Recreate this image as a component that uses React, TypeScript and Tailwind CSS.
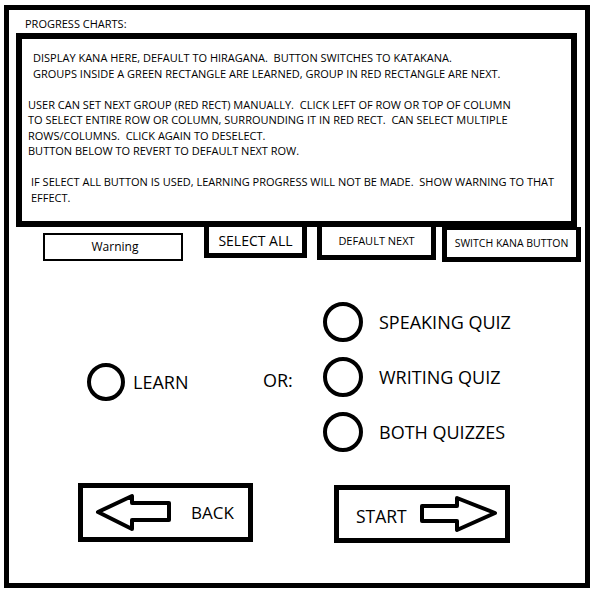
import React from "react";

const font = { fontFamily: '"Open Sans", "Liberation Sans", sans-serif' };

const Radio: React.FC<{ size?: string }> = ({ size = "w-[40px] h-[40px]" }) => (
  <div className={`${size} rounded-full border-[4px] border-black shrink-0`} />
);

const ArrowLeft = () => (
  <svg width="78" height="39" viewBox="0 0 78 39" className="shrink-0">
    <polygon
      points="3,19 37,3 37,10 74,10 74,27 37,27 37,36"
      fill="white"
      stroke="black"
      strokeWidth="4"
      strokeLinejoin="round"
    />
  </svg>
);

const ArrowRight = () => (
  <svg width="79" height="39" viewBox="0 0 79 39" className="shrink-0">
    <polygon
      points="2,11 37,11 37,3 75,18 37,35 37,26 2,26"
      fill="white"
      stroke="black"
      strokeWidth="4"
      strokeLinejoin="round"
    />
  </svg>
);

export default function App() {
  return (
    <div className="w-[600px] h-[600px] bg-white text-black overflow-hidden" style={font}>
      <div className="ml-[4px] mt-[5px] w-[586px] h-[583px] border-[5px] border-black flex flex-col">
        {/* title */}
        <div className="h-[23px] pl-[16px] pt-[7px] text-[11px] leading-[13px]">PROGRESS CHARTS:</div>

        {/* kana chart placeholder */}
        <div className="ml-[7px] w-[561px] h-[194px] border-[6px] border-black pt-[11px] text-[11px] leading-[15.5px] whitespace-pre">
          <div className="pl-[11px]">
            <div>DISPLAY KANA HERE, DEFAULT TO HIRAGANA.  BUTTON SWITCHES TO KATAKANA.</div>
            <div>GROUPS INSIDE A GREEN RECTANGLE ARE LEARNED, GROUP IN RED RECTANGLE ARE NEXT.</div>
          </div>
          <div className="h-[15.5px]" />
          <div className="pl-[6px]">
            <div>USER CAN SET NEXT GROUP (RED RECT) MANUALLY.  CLICK LEFT OF ROW OR TOP OF COLUMN</div>
            <div>TO SELECT ENTIRE ROW OR COLUMN, SURROUNDING IT IN RED RECT.  CAN SELECT MULTIPLE</div>
            <div>ROWS/COLUMNS.  CLICK AGAIN TO DESELECT.</div>
            <div>BUTTON BELOW TO REVERT TO DEFAULT NEXT ROW.</div>
          </div>
          <div className="h-[15.5px]" />
          <div className="pl-[9px]">
            <div>IF SELECT ALL BUTTON IS USED, LEARNING PROGRESS WILL NOT BE MADE.  SHOW WARNING TO THAT</div>
            <div>EFFECT.</div>
          </div>
        </div>

        {/* button row */}
        <div className="flex items-start h-[35px]">
          <div className="ml-[34px] mt-[6px] w-[140px] h-[28px] border-2 border-black flex items-center justify-center text-[12px]">
            <span className="ml-[4px]">Warning</span>
          </div>
          <div className="ml-[21px] w-[103px] h-[31px] border-[5px] border-t-0 border-black flex items-center justify-center text-[14px]">
            SELECT ALL
          </div>
          <div className="ml-[10px] w-[119px] h-[33px] border-[5px] border-t-0 border-black flex items-center justify-center text-[11px]">
            DEFAULT NEXT
          </div>
          <div className="ml-[6px] w-[139px] h-[35px] border-[5px] border-t-[3px] border-black flex items-center justify-center text-[10.5px]">
            SWITCH KANA BUTTON
          </div>
        </div>

        {/* mode choice */}
        <div className="mt-[40px] flex items-start h-[151px]">
          <div className="ml-[78px] w-[176px] mt-[61px] h-[38px] flex items-center gap-[8px]">
            <Radio size="w-[38px] h-[38px]" />
            <span className="text-[18px]">LEARN</span>
          </div>
          <div className="w-[60px] mt-[59px] h-[38px] flex items-center text-[18px]">OR:</div>
          <div className="flex flex-col gap-[15px]">
            <div className="flex items-center gap-[16px]">
              <Radio />
              <span className="text-[18px]">SPEAKING QUIZ</span>
            </div>
            <div className="flex items-center gap-[16px]">
              <Radio />
              <span className="text-[18px]">WRITING QUIZ</span>
            </div>
            <div className="flex items-center gap-[16px]">
              <Radio />
              <span className="text-[18px]">BOTH QUIZZES</span>
            </div>
          </div>
        </div>

        {/* navigation */}
        <div className="mt-[30px] flex items-start">
          <div className="ml-[69px] w-[175px] h-[59px] border-[5px] border-black flex items-center pl-[12px]">
            <ArrowLeft />
            <span className="ml-[18px] text-[17px] leading-none">BACK</span>
          </div>
          <div className="ml-[81px] mt-[2px] w-[176px] h-[58px] border-[5px] border-black flex items-center pl-[17px]">
            <span className="text-[17.5px] leading-none mt-[6px]">START</span>
            <span className="ml-[13px]">
              <ArrowRight />
            </span>
          </div>
        </div>
      </div>
    </div>
  );
}
